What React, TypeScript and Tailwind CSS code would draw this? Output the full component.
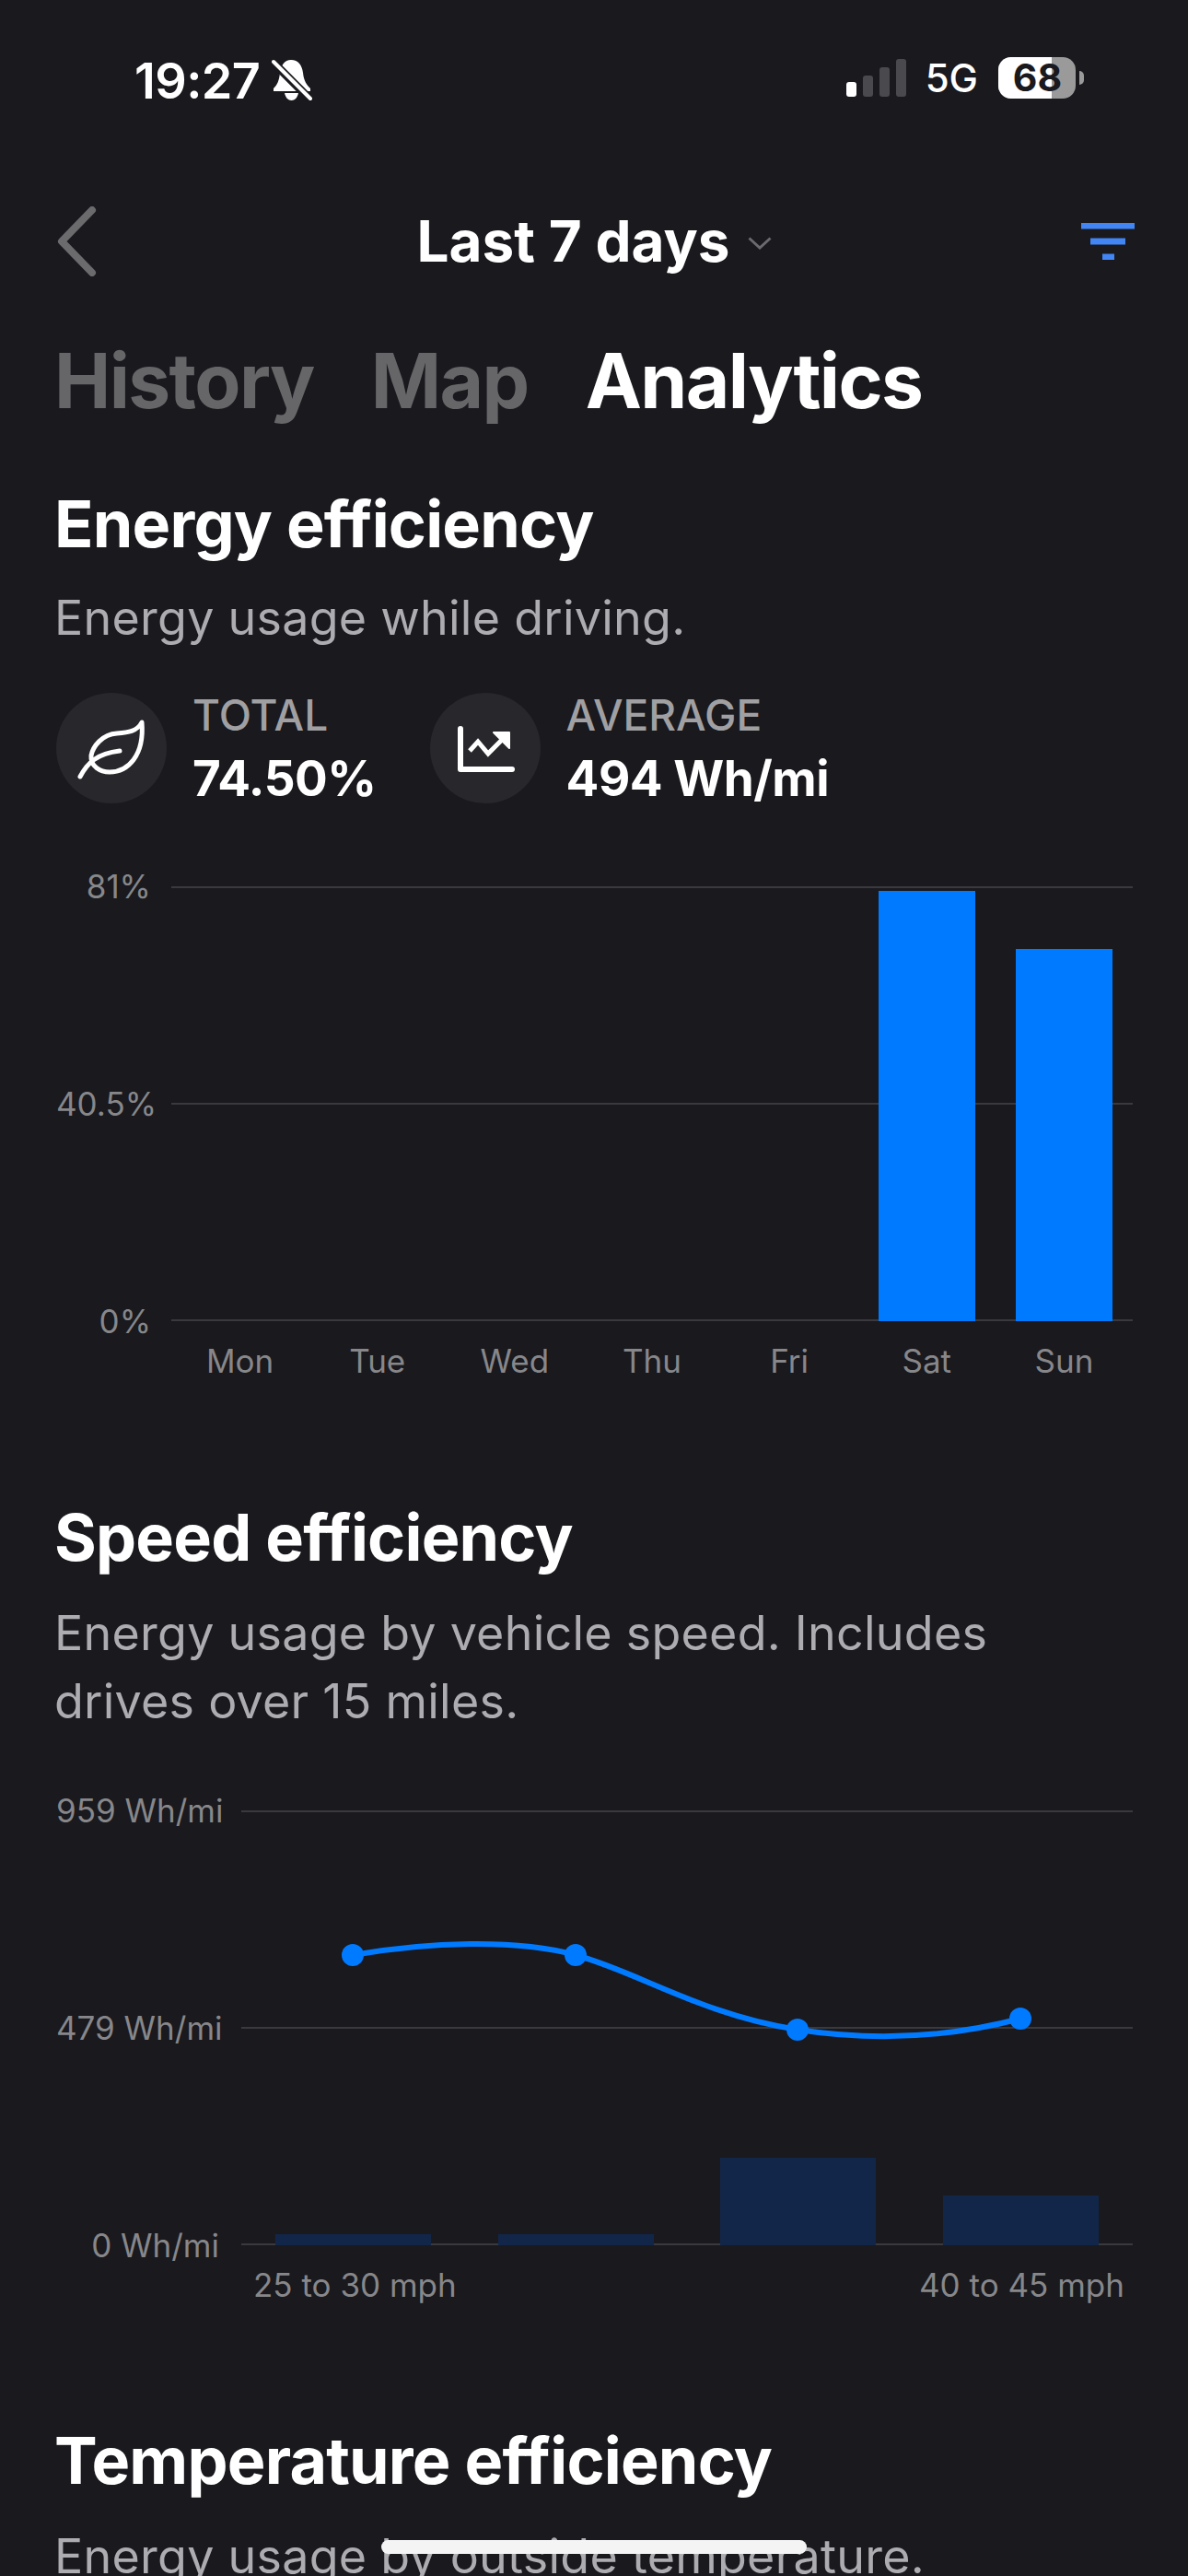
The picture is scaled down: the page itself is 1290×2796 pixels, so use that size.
const days = ["Mon", "Tue", "Wed", "Thu", "Fri", "Sat", "Sun"];
const dayBars = [0, 0, 0, 0, 0, 467, 404];
const speedBars = [12, 12, 95, 54];

function StatusBar() {
  return (
    <div className="flex h-[130px] items-start justify-between pt-[62px] pl-[146px] pr-[113px]">
      <div className="flex items-center gap-[13px]">
        <span className="text-[54px] leading-[52px] font-semibold tracking-[-0.6px] text-white">19:27</span>
        <svg width="44" height="46" viewBox="0 0 44 46" className="-mt-[2px]">
          <path d="M21 1c8 0 12 6 13 14 1 9 4 13 8 17v3H2v-3c4-4 6-8 7-17 1-8 5-14 12-14z" fill="#fff" />
          <path d="M14 37h15c-1 5-4 8-7.500 8S15 42 14 37z" fill="#fff" />
          <path d="M3 5l38 38" stroke="#19191e" strokeWidth="9" />
          <path d="M2 3l40 40" stroke="#fff" strokeWidth="4" strokeLinecap="round" />
        </svg>
      </div>
      <div className="flex items-center">
        <div className="flex items-end gap-[7px]">
          <span className="h-[16px] w-[11px] rounded-[3px] bg-white" />
          <span className="h-[23px] w-[11px] rounded-[3px] bg-[#4a4a4e]" />
          <span className="h-[32px] w-[11px] rounded-[3px] bg-[#4a4a4e]" />
          <span className="h-[41px] w-[11px] rounded-[3px] bg-[#4a4a4e]" />
        </div>
        <span className="ml-[21px] text-[42px] leading-[44px] font-medium text-white">5G</span>
        <div className="relative ml-[22px] flex h-[45px] w-[84px] rounded-[14px] bg-[#9a9a9a]">
          <span className="h-full w-[58px] rounded-l-[14px] bg-white" />
          <span className="absolute inset-0 pl-[1px] text-center text-[41px] leading-[45px] font-bold text-[#19191e]">68</span>
        </div>
        <span className="ml-[4px] h-[15px] w-[5px] rounded-r-full bg-[#9a9a9a]" />
      </div>
    </div>
  );
}

function Header() {
  return (
    <div className="mt-[54px] flex h-[156px] items-center justify-between">
      <svg width="44" height="76" viewBox="0 0 44 76">
        <path d="M39 4L6 38l33 34" fill="none" stroke="#6b6b6e" strokeWidth="8" strokeLinecap="round" strokeLinejoin="round" />
      </svg>
      <div className="flex items-center gap-[20px] pl-[12px]">
        <span className="text-[62px] leading-[76px] font-bold text-white">Last 7 days</span>
        <svg width="26" height="14" viewBox="0 0 26 14" className="mt-[4px]">
          <path d="M1.500 1.500L13 12 24.500 1.500" fill="none" stroke="#6b6b6e" strokeWidth="3" />
        </svg>
      </div>
      <svg width="58" height="40" viewBox="0 0 58 40" className="-mr-[2px]">
        <path d="M0 3h58M10 20h38M23 37h13" stroke="#4285f4" strokeWidth="7" fill="none" />
      </svg>
    </div>
  );
}

function Tabs() {
  return (
    <div className="mt-[24px] -ml-[2px] flex gap-[62px] text-[82px] leading-[100px] font-bold tracking-[-1.6px]">
      <span className="text-[#666668]">History</span>
      <span className="text-[#666668]">Map</span>
      <span className="text-white">Analytics</span>
    </div>
  );
}

function LeafIcon() {
  return (
    <svg width="120" height="120" viewBox="0 0 120 120" className="absolute inset-0">
      <path d="M93 32C88 42 78 43 66 44 50 45 40 58 38 68 37 80 48 86 58 86 78 86 96 68 93 32Z" fill="none" stroke="#fff" strokeWidth="5" strokeLinejoin="round" />
      <path d="M26 91C34 76 44 66 69 63" fill="none" stroke="#fff" strokeWidth="5" strokeLinecap="round" />
    </svg>
  );
}

function TrendIcon() {
  return (
    <svg width="120" height="120" viewBox="0 0 120 120" className="absolute inset-0">
      <path d="M33 39v44h56" fill="none" stroke="#fff" strokeWidth="6" strokeLinecap="round" strokeLinejoin="round" />
      <path d="M43 63l9-10 11 13 17-17" fill="none" stroke="#fff" strokeWidth="5" />
      <path d="M86 43H69l17 17z" fill="#fff" stroke="#fff" strokeWidth="2" strokeLinejoin="round" />
    </svg>
  );
}

function Stat({ label, value, icon }: { label: string; value: string; icon: React.ReactNode }) {
  return (
    <div className="flex items-center gap-[28px]">
      <div className="relative h-[120px] w-[120px] rounded-full bg-[#27272c]">{icon}</div>
      <div className="flex flex-col">
        <span className="text-[46px] leading-[56px] font-medium text-[#a0a0a3]">{label}</span>
        <span className="mt-[10px] text-[53px] leading-[62px] font-bold tracking-[-0.5px] text-white">{value}</span>
      </div>
    </div>
  );
}

function YLabels({ labels, width }: { labels: string[]; width: string }) {
  return (
    <div className={`-my-[24px] flex shrink-0 flex-col justify-between text-right text-[35px] leading-[48px] whitespace-nowrap text-[#87878a] ${width}`}>
      {labels.map((l) => (
        <span key={l}>{l}</span>
      ))}
    </div>
  );
}

function GridLines() {
  return (
    <div className="absolute inset-0 flex flex-col justify-between">
      <span className="h-[2px] bg-[#3a3a3e]" />
      <span className="h-[2px] bg-[#3a3a3e]" />
      <span className="h-[2px] bg-[#3a3a3e]" />
    </div>
  );
}

function SectionHead({ title, children, gap }: { title: string; children: string; gap: string }) {
  return (
    <div className="-ml-[2px]">
      <h2 className="text-[70px] leading-[88px] font-bold tracking-[-0.8px] text-white">{title}</h2>
      <p className={`text-[52px] leading-[74px] tracking-[0.25px] text-[#adadb1] ${gap}`}>{children}</p>
    </div>
  );
}

function EnergySection() {
  return (
    <section className="mt-[61px]">
      <SectionHead title="Energy efficiency" gap="mt-[21px]">
        Energy usage while driving.
      </SectionHead>
      <div className="mt-[40px] flex gap-[58px]">
        <Stat label="TOTAL" value="74.50%" icon={<LeafIcon />} />
        <Stat label="AVERAGE" value="494 Wh/mi" icon={<TrendIcon />} />
      </div>
      <div className="mt-[86px] flex gap-[23px]">
        <YLabels labels={["81%", "40.5%", "0%"]} width="w-[103px]" />
        <div className="relative -ml-[1px] h-[472px] flex-1">
          <GridLines />
          <div className="absolute inset-0 flex items-end">
            {dayBars.map((h, i) => (
              <div key={days[i]} className="flex flex-1 justify-center">
                <div className="w-[105px] bg-[#007aff]" style={{ height: h }} />
              </div>
            ))}
          </div>
        </div>
      </div>
      <div className="mt-[21px] ml-[125px] flex text-[35px] leading-[44px] text-[#87878a]">
        {days.map((d) => (
          <span key={d} className="flex-1 text-center">
            {d}
          </span>
        ))}
      </div>
    </section>
  );
}

function SpeedChart() {
  return (
    <svg width="967" height="472" viewBox="0 0 967 472" className="absolute inset-0">
      <path
        d="M121 157C215 141 305 141 363 157 430 175 500 222 604 238 650 245 740 254 846 226"
        fill="none"
        stroke="#007aff"
        strokeWidth="6"
      />
      {[
        [121, 157],
        [363, 157],
        [604, 238],
        [846, 226],
      ].map(([x, y]) => (
        <circle key={x} cx={x} cy={y} r="12" fill="#007aff" />
      ))}
    </svg>
  );
}

function SpeedSection() {
  return (
    <section className="mt-[126px]">
      <SectionHead title="Speed efficiency" gap="mt-[23px]">
        Energy usage by vehicle speed. Includes drives over 15 miles.
      </SectionHead>
      <div className="mt-[81px] flex gap-[24px]">
        <YLabels labels={["959 Wh/mi", "479 Wh/mi", "0 Wh/mi"]} width="w-[177px]" />
        <div className="relative h-[472px] flex-1">
          <GridLines />
          <div className="absolute inset-x-[37px] inset-y-0 flex items-end justify-between">
            {speedBars.map((h, i) => (
              <div key={i} className="w-[169px] bg-[#12264a]" style={{ height: h }} />
            ))}
          </div>
          <SpeedChart />
        </div>
      </div>
      <div className="mt-[21px] ml-[202px] flex justify-between pr-[9px] pl-[12px] text-[35px] leading-[44px] text-[#87878a]">
        <span>25 to 30 mph</span>
        <span>40 to 45 mph</span>
      </div>
    </section>
  );
}

export default function App() {
  return (
    <div className="relative h-[2796px] w-[1290px] overflow-hidden bg-[#19191e] font-['Inter',sans-serif]">
      <StatusBar />
      <div className="pr-[60px] pl-[61px]">
        <Header />
        <Tabs />
        <EnergySection />
        <SpeedSection />
        <section className="mt-[125px]">
          <SectionHead title="Temperature efficiency" gap="mt-[23px]">
            Energy usage by outside temperature.
          </SectionHead>
        </section>
      </div>
      {/* home indicator */}
      <div className="absolute top-[2757px] left-[414px] h-[15px] w-[462px] rounded-full bg-[#f4f4f4]" />
    </div>
  );
}
